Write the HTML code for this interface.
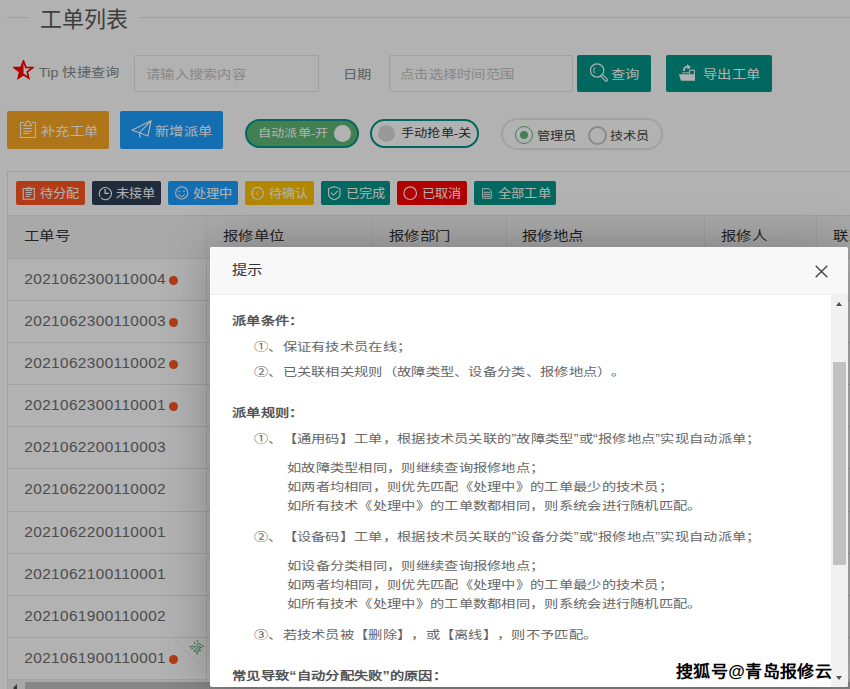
<!DOCTYPE html>
<html lang="zh-CN"><head><meta charset="utf-8">
<style>
*{box-sizing:border-box;margin:0;padding:0}
html,body{text-spacing-trim:space-all;width:850px;height:689px;overflow:hidden;background:#fff;font-family:"Liberation Sans",sans-serif;color:#666}
div,svg{position:absolute}
.t{white-space:nowrap;line-height:1}
.s84{transform:scaleY(0.84)}
.s9{transform:scaleY(0.93)}
.inp{border:1px solid #e6e6e6;border-radius:2px;height:37px;top:55px}
.teal{background:#009688}
.tag{top:181px;height:24px;border-radius:2px}
.hl{height:1px;background:#e6e6e6}
.vl{width:1px;background:#e6e6e6}
.th{font-size:15.4px;letter-spacing:0.4px;color:#333;transform:scaleY(0.84)}
.td{font-size:15.4px;color:#6e6e6e;letter-spacing:0.37px;left:25px}
.dot{width:9px;height:9px;border-radius:50%;background:#FF5722}
.mc{font-size:14.3px;letter-spacing:0.3px;color:#666;transform:scaleY(0.83)}
.mb{font-weight:bold;color:#555}
</style></head><body>

<div class="hl" style="left:7px;top:17px;width:22px;background:#e2e2e2"></div>
<div class="hl" style="left:139px;top:17px;width:720px;background:#e2e2e2"></div>
<div class="t" style="left:40px;top:9px;font-size:22px;color:#5a5a5a">工单列表</div>
<svg style="left:13px;top:60px" width="21" height="20" viewBox="0 0 21 20">
  <path d="M10.5 1 L12.9 7.4 L19.8 7.6 L14.3 11.8 L15.7 18 L10.5 14.5 L5.3 18 L6.7 11.8 L1.2 7.6 L8.1 7.4 Z" fill="none" stroke="#FF0000" stroke-width="1.7" stroke-linejoin="miter"/>
  <path d="M10.5 1 L8.1 7.4 L1.2 7.6 L6.7 11.8 L5.3 18 L10.5 14.5 Z" fill="#FF0000"/>
</svg>
<div class="t s84" style="left:39px;top:66px;font-size:14.3px;letter-spacing:0.3px;color:#888"><span style="letter-spacing:0">Tip </span>快捷查询</div>
<div class="inp" style="left:134px;width:185px"></div>
<div class="t s84" style="left:146px;top:67.75px;font-size:14.3px;letter-spacing:0.3px;color:#c2c2c2">请输入搜索内容</div>
<div class="t s84" style="left:343px;top:67.75px;font-size:14.3px;letter-spacing:0.3px;color:#888">日期</div>
<div class="inp" style="left:389px;width:184px"></div>
<div class="t s84" style="left:400px;top:67.75px;font-size:14.3px;letter-spacing:0.3px;color:#c2c2c2">点击选择时间范围</div>
<div class="teal" style="left:577px;top:55px;width:74px;height:37px;border-radius:2px"></div>
<svg style="left:586px;top:60px" width="26" height="26" viewBox="0 0 26 26">
<circle cx="11.1" cy="10.5" r="6.7" fill="none" stroke="#fff" stroke-width="1.2"/>
<path d="M8.6 7.4 Q6.6 10.4 8.6 13.4" fill="none" stroke="#fff" stroke-width="1"/>
<path d="M16.2 16 L20.2 20" stroke="#fff" stroke-width="3.6" stroke-linecap="round"/>
<path d="M16.2 16 L20.2 20" stroke="#009688" stroke-width="1.4" stroke-linecap="round"/>
</svg>
<div class="t s84" style="left:611px;top:68px;font-size:14.3px;letter-spacing:0.3px;color:#fff">查询</div>
<div class="teal" style="left:666px;top:55px;width:106px;height:37px;border-radius:2px"></div>
<svg style="left:674px;top:60px" width="26" height="26" viewBox="0 0 26 26">
<path d="M15.6 14 V10.3 H20.3 V20.5" fill="none" stroke="#fff" stroke-width="1.1"/>
<path d="M8.1 12.4 H15.3 V13.3 H8.1 Z" fill="#fff"/>
<path d="M4.9 14.3 H20.8 V20.8 H7 Z" fill="#fff"/>
<path d="M9.9 11 Q9.7 6.9 13.4 6.6" fill="none" stroke="#fff" stroke-width="1.8"/>
<path d="M12.9 4 L16.8 7.2 L13.6 9.6 Z" fill="#fff"/>
</svg>
<div class="t s84" style="left:703px;top:68px;font-size:14.3px;letter-spacing:0.3px;color:#fff">导出工单</div>
<div style="left:7px;top:111px;width:102px;height:38px;border-radius:2px;background:#FBA825"></div>
<svg style="left:16px;top:117px" width="24" height="24" viewBox="0 0 24 24">
<path d="M7.9 5.5 H4.5 V20.4 H19.4 V5.5 H15.8" fill="none" stroke="#fff" stroke-width="1.05"/>
<path d="M7.8 8.7 L10.1 5.7 Q10.6 4.1 12 4.1 Q13.4 4.1 13.9 5.7 L15.9 8.7 Z" fill="none" stroke="#fff" stroke-width="1.05" stroke-linejoin="round"/>
<path d="M7.3 11.5H15.9M7.3 14.3H15.9M7.3 16.4H13.6" stroke="#fff" stroke-width="1.05"/>
</svg>
<div class="t s84" style="left:41px;top:125px;font-size:14.3px;letter-spacing:0.3px;color:#fff">补充工单</div>
<div style="left:120px;top:111px;width:103px;height:38px;border-radius:2px;background:#1E9FFF"></div>
<svg style="left:126px;top:112px" width="30" height="30" viewBox="0 0 30 30">
<path d="M25 8.8 L6 18.3 L13.5 20.7 Z M25 8.8 L21.9 24 L13.5 20.7 M13.5 20.7 L13.8 25.8" fill="none" stroke="#fff" stroke-width="1.2" stroke-linejoin="round"/>
</svg>
<div class="t s84" style="left:155px;top:125px;font-size:14.3px;letter-spacing:0.3px;color:#fff">新增派单</div>
<div style="left:245px;top:119px;width:114px;height:29px;border:2px solid #009688;border-radius:15px;background:#5FB878"></div>
<div class="t s84" style="left:258px;top:127px;font-size:13.2px;letter-spacing:0.2px;color:#fff">自动派单-开</div>
<div style="left:334px;top:125px;width:17px;height:17px;border-radius:50%;background:#fff"></div>
<div style="left:370px;top:119px;width:109px;height:29px;border:2px solid #009688;border-radius:15px;background:#fff"></div>
<div style="left:378px;top:125px;width:17px;height:17px;border-radius:50%;background:#dcdcdc"></div>
<div class="t s84" style="left:401px;top:127px;font-size:13.2px;letter-spacing:0.2px;color:#333">手动抢单-关</div>
<div style="left:501px;top:118px;width:162px;height:32px;border:2px solid #e8e8e8;border-radius:16px"></div>
<div style="left:515px;top:126px;width:18px;height:18px;border-radius:50%;border:1.3px solid #5FB878"></div>
<div style="left:520px;top:131px;width:8px;height:8px;border-radius:50%;background:#5FB878"></div>
<div class="t s84" style="left:537px;top:130px;font-size:13.2px;letter-spacing:0.2px;color:#444">管理员</div>
<div style="left:588px;top:126px;width:19px;height:19px;border-radius:50%;border:2px solid #c8c8c8"></div>
<div class="t s84" style="left:610px;top:130px;font-size:13.2px;letter-spacing:0.2px;color:#444">技术员</div>
<div style="left:7px;top:171px;width:860px;height:530px;border:1px solid #e6e6e6"></div>
<div class="hl" style="left:7px;top:215px;width:850px"></div>
<div style="left:8px;top:216px;width:850px;height:42px;background:#f2f2f2"></div>
<div class="tag" style="left:16px;width:69px;background:#FF5722"></div>
<div class="t s9" style="left:40px;top:187px;font-size:13.2px;letter-spacing:0.2px;color:#fff">待分配</div>
<div class="tag" style="left:92px;width:69px;background:#2F4056"></div>
<div class="t s9" style="left:116px;top:187px;font-size:13.2px;letter-spacing:0.2px;color:#fff">未接单</div>
<div class="tag" style="left:168px;width:70px;background:#1E9FFF"></div>
<div class="t s9" style="left:193px;top:187px;font-size:13.2px;letter-spacing:0.2px;color:#fff">处理中</div>
<div class="tag" style="left:245px;width:69px;background:#FFC300"></div>
<div class="t s9" style="left:269px;top:187px;font-size:13.2px;letter-spacing:0.2px;color:#fff">待确认</div>
<div class="tag" style="left:321px;width:69px;background:#009688"></div>
<div class="t s9" style="left:346px;top:187px;font-size:13.2px;letter-spacing:0.2px;color:#fff">已完成</div>
<div class="tag" style="left:397px;width:70px;background:#FF0000"></div>
<div class="t s9" style="left:422px;top:187px;font-size:13.2px;letter-spacing:0.2px;color:#fff">已取消</div>
<div class="tag" style="left:474px;width:82px;background:#009688"></div>
<div class="t s9" style="left:498px;top:187px;font-size:13.2px;letter-spacing:0.2px;color:#fff">全部工单</div>
<svg style="left:20px;top:184px" width="18" height="18" viewBox="0 0 18 18">
<path d="M3.2 4.5 H14.3 V15.2 H3.2 Z" fill="none" stroke="#fff" stroke-width="1.1"/>
<path d="M6 6.3 L6.8 4.2 Q7.6 3.2 8.7 3.2 Q9.8 3.2 10.6 4.2 L11.6 6.3 Z" fill="none" stroke="#fff" stroke-width="1"/>
<path d="M5.5 8.5H11.7M5.5 10.5H11.7M5.5 12.5H9.9" stroke="#fff" stroke-width="1"/>
</svg>
<svg style="left:96px;top:184px" width="18" height="18" viewBox="0 0 18 18">
<path d="M5 13.9 A6.1 6.1 0 1 0 4.2 12.9" fill="none" stroke="#fff" stroke-width="1.1"/>
<path d="M9.1 5 V9.4 H12.8" fill="none" stroke="#fff" stroke-width="1.3"/>
</svg>
<svg style="left:172px;top:184px" width="18" height="18" viewBox="0 0 18 18">
<circle cx="9.7" cy="8.9" r="6.1" fill="none" stroke="#fff" stroke-width="1.1"/>
<path d="M6.3 7.4H7.8M11.2 7.4H12.8" stroke="#fff" stroke-width="1"/>
<path d="M6.3 10.4 Q9.5 14.4 12.8 10.4" fill="none" stroke="#fff" stroke-width="1"/>
</svg>
<svg style="left:249px;top:184px" width="18" height="18" viewBox="0 0 18 18">
<circle cx="8.5" cy="9.3" r="5.9" fill="none" stroke="#fff" stroke-width="1.1"/>
<path d="M9.7 7.2 L7.4 9.4 L9.7 11.4" fill="none" stroke="#fff" stroke-width="1"/>
<path d="M4.3 7.4 V11.2" stroke="#fff" stroke-width="0.8"/>
</svg>
<svg style="left:325px;top:184px" width="18" height="18" viewBox="0 0 18 18">
<path d="M9.3 2.7 L15 4.6 V10.6 Q14.8 14 9.3 15.8 Q3.8 14 3.6 10.6 V4.6 Z" fill="none" stroke="#fff" stroke-width="1.1"/>
<path d="M5.6 8.6 L8.4 11.1 L12.9 6.9" fill="none" stroke="#fff" stroke-width="1.1"/>
</svg>
<svg style="left:401px;top:184px" width="18" height="18" viewBox="0 0 18 18">
<circle cx="9.2" cy="9.2" r="6.3" fill="none" stroke="#fff" stroke-width="1.1"/>
</svg>
<svg style="left:479px;top:184px" width="18" height="18" viewBox="0 0 18 18">
<path d="M3.6 4.6 H9.9 L12.3 7 V14.3 H3.6 Z" fill="none" stroke="#fff" stroke-width="0.9"/>
<path d="M4.5 8.3H11.3M4.5 10.4H11.3M4.5 12.4H11.3" stroke="#fff" stroke-width="0.9"/>
</svg>
<div class="t th" style="left:24px;top:228px">工单号</div>
<div class="t th" style="left:223px;top:228px">报修单位</div>
<div class="t th" style="left:389px;top:228px">报修部门</div>
<div class="t th" style="left:522px;top:228px">报修地点</div>
<div class="t th" style="left:721px;top:228px">报修人</div>
<div class="t th" style="left:833px;top:228px">联系</div>
<div class="vl" style="left:206px;top:216px;height:464px"></div>
<div class="vl" style="left:372px;top:216px;height:464px"></div>
<div class="vl" style="left:506px;top:216px;height:464px"></div>
<div class="vl" style="left:704px;top:216px;height:464px"></div>
<div class="vl" style="left:816px;top:216px;height:464px"></div>
<div class="hl" style="left:7px;top:258px;width:850px"></div>
<div class="hl" style="left:7px;top:300px;width:850px"></div>
<div class="hl" style="left:7px;top:342px;width:850px"></div>
<div class="hl" style="left:7px;top:384px;width:850px"></div>
<div class="hl" style="left:7px;top:426px;width:850px"></div>
<div class="hl" style="left:7px;top:468px;width:850px"></div>
<div class="hl" style="left:7px;top:511px;width:850px"></div>
<div class="hl" style="left:7px;top:553px;width:850px"></div>
<div class="hl" style="left:7px;top:595px;width:850px"></div>
<div class="hl" style="left:7px;top:637px;width:850px"></div>
<div class="hl" style="left:7px;top:679px;width:850px"></div>
<div class="t td" style="top:271px;left:24.3px">2021062300110004</div>
<div class="dot" style="left:169px;top:276px"></div>
<div class="t td" style="top:313px;left:24.3px">2021062300110003</div>
<div class="dot" style="left:169px;top:318px"></div>
<div class="t td" style="top:355px;left:24.3px">2021062300110002</div>
<div class="dot" style="left:169px;top:360px"></div>
<div class="t td" style="top:397px;left:24.3px">2021062300110001</div>
<div class="dot" style="left:169px;top:402px"></div>
<div class="t td" style="top:439px;left:24.3px">2021062200110003</div>
<div class="t td" style="top:481px;left:24.3px">2021062200110002</div>
<div class="t td" style="top:524px;left:24.3px">2021062200110001</div>
<div class="t td" style="top:566px;left:24.3px">2021062100110001</div>
<div class="t td" style="top:608px;left:24.3px">2021061900110002</div>
<div class="t td" style="top:650px;left:24.3px">2021061900110001</div>
<div class="dot" style="left:169px;top:655px"></div>
<svg style="left:172px;top:637px" width="34" height="34" viewBox="0 0 34 34"><path d="M0.5 0.5 L34 34" stroke="#eaeaea" stroke-width="0.9"/>
<text x="24.3" y="10.6" font-size="12.5" fill="#3FA777" transform="rotate(45 24.3 10.3)" text-anchor="middle" dominant-baseline="central">派</text></svg>
<div style="left:8px;top:680px;width:850px;height:17px;background:#f1f1f1"></div>
<div style="left:25px;top:682px;width:830px;height:13px;background:#c1c1c1"></div>
<div style="left:13px;top:684px;width:0;height:0;border-top:4px solid transparent;border-bottom:4px solid transparent;border-right:4px solid #505050"></div>
<div style="left:0;top:0;width:850px;height:689px;background:rgba(0,0,0,.3)"></div>
<div style="left:210px;top:247px;width:638px;height:440px;background:#fff;border-radius:2px;box-shadow:1px 1px 50px rgba(0,0,0,.3);overflow:hidden">
<div style="left:0;top:0;width:638px;height:48px;background:#f8f8f8;border-bottom:1px solid #eee"></div>
<div class="t s84" style="left:22px;top:15px;font-size:15.4px;letter-spacing:0.4px;color:#333">提示</div>
<svg style="left:605px;top:18px" width="13" height="13" viewBox="0 0 13 13"><path d="M0.7 0.7 L12.3 12.3 M12.3 0.7 L0.7 12.3" stroke="#444" stroke-width="1.4"/></svg>
<div style="left:621px;top:48px;width:17px;height:392px;background:#f1f1f1"></div>
<div style="left:623px;top:115px;width:13px;height:203px;background:#c1c1c1"></div>
<div style="left:626px;top:55px;width:0;height:0;border-left:3.5px solid transparent;border-right:3.5px solid transparent;border-bottom:4px solid #505050"></div>
<div style="left:626px;top:429px;width:0;height:0;border-left:3.5px solid transparent;border-right:3.5px solid transparent;border-top:4px solid #505050"></div>
<div class="t mc mb" style="left:22px;top:66.75px">派单条件：</div>
<div class="t mc" style="left:44px;top:92.75px">①、保证有技术员在线；</div>
<div class="t mc" style="left:44px;top:117.75px">②、已关联相关规则（故障类型、设备分类、报修地点）。</div>
<div class="t mc mb" style="left:22px;top:158.75px">派单规则：</div>
<div class="t mc" style="left:44px;top:184.75px">①、【通用码】工单，根据技术员关联的”故障类型”或“报修地点”实现自动派单；</div>
<div class="t mc" style="left:77px;top:213.75px">如故障类型相同，则继续查询报修地点；</div>
<div class="t mc" style="left:77px;top:232.75px">如两者均相同，则优先匹配《处理中》的工单最少的技术员；</div>
<div class="t mc" style="left:77px;top:251.75px">如所有技术《处理中》的工单数都相同，则系统会进行随机匹配。</div>
<div class="t mc" style="left:44px;top:282.75px">②、【设备码】工单，根据技术员关联的”设备分类”或“报修地点”实现自动派单；</div>
<div class="t mc" style="left:77px;top:311.75px">如设备分类相同，则继续查询报修地点；</div>
<div class="t mc" style="left:77px;top:330.75px">如两者均相同，则优先匹配《处理中》的工单最少的技术员；</div>
<div class="t mc" style="left:77px;top:349.75px">如所有技术《处理中》的工单数都相同，则系统会进行随机匹配。</div>
<div class="t mc" style="left:44px;top:380.75px">③、若技术员被【删除】，或【离线】，则不予匹配。</div>
<div class="t mc mb" style="left:22px;top:421.75px">常见导致“自动分配失败”的原因：</div>
</div>
<div class="t s9" style="left:676px;top:663px;font-size:17px;letter-spacing:0.4px;font-weight:bold;color:#000;text-shadow:1px 0 #fff,-1px 0 #fff,0 1px #fff,0 -1px #fff">搜狐号@青岛报修云</div>
</body></html>
